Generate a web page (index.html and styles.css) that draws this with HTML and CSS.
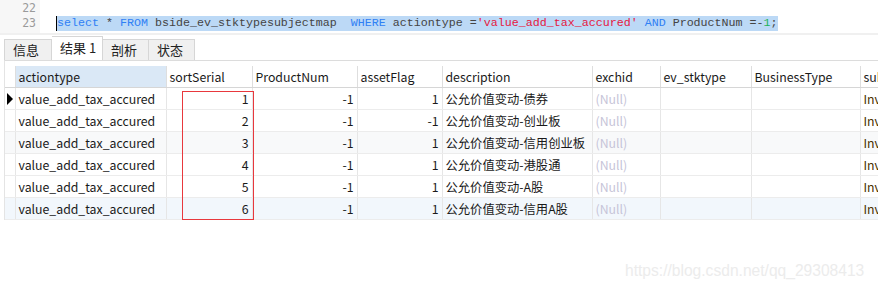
FILE: index.html
```html
<!DOCTYPE html>
<html lang="zh-CN">
<head>
  <meta charset="UTF-8">
  <title>查询结果</title>
  <link rel="stylesheet" href="styles.css">
</head>
<body>
  <div class="editor">
    <div class="gutter">
      <div class="ln">22</div>
      <div class="ln">23</div>
    </div>
    <div class="code">
      <div class="line"></div>
      <div class="line"><span class="sel"><span class="kw">select</span> * <span class="kw">FROM</span> bside_ev_stktypesubjectmap  <span class="kw">WHERE</span> actiontype =<span class="str">'value_add_tax_accured'</span> <span class="kw">AND</span> ProductNum =-<span class="num">1</span>;</span></div>
    </div>
  </div>

  <div class="tabs">
    <div class="tab">信息</div>
    <div class="tab active">结果 1</div>
    <div class="tab">剖析</div>
    <div class="tab">状态</div>
  </div>

  <div class="grid-wrap">
    <table class="grid">
      <colgroup>
        <col style="width:10px">
        <col style="width:151px">
        <col style="width:86px">
        <col style="width:105px">
        <col style="width:85px">
        <col style="width:150px">
        <col style="width:68px">
        <col style="width:91px">
        <col style="width:109px">
        <col style="width:60px">
      </colgroup>
      <thead>
        <tr>
          <th class="ind"></th>
          <th class="cur">actiontype</th>
          <th>sortSerial</th>
          <th>ProductNum</th>
          <th>assetFlag</th>
          <th>description</th>
          <th>exchid</th>
          <th>ev_stktype</th>
          <th>BusinessType</th>
          <th>subjectcode</th>
        </tr>
      </thead>
      <tbody id="rows"></tbody>
    </table>
    <div class="mark"></div>
  </div>

  <div class="watermark">https://blog.csdn.net/qq_29308413</div>

  <script>
    const rows = [
      [1, -1, 1, '公允价值变动-债券'],
      [2, -1, -1, '公允价值变动-创业板'],
      [3, -1, 1, '公允价值变动-信用创业板'],
      [4, -1, 1, '公允价值变动-港股通'],
      [5, -1, 1, '公允价值变动-A股'],
      [6, -1, 1, '公允价值变动-信用A股']
    ];

    const body = document.getElementById('rows');
    rows.forEach((r, i) => {
      const tr = document.createElement('tr');
      if (i === 2) tr.className = 'alt';
      if (i === 5) tr.className = 'last';
      tr.innerHTML = `
        <td class="ind">${i === 0 ? '<span class="arrow"></span>' : ''}</td>
        <td>value_add_tax_accured</td>
        <td class="n">${r[0]}</td>
        <td class="n">${r[1]}</td>
        <td class="n">${r[2]}</td>
        <td>${r[3]}</td>
        <td class="null">(Null)</td>
        <td></td>
        <td></td>
        <td class="sub">Investment</td>
      `;
      body.appendChild(tr);
    });
  </script>
</body>
</html>
```

FILE: styles.css
```css
body {
  margin: 0;
  width: 878px;
  height: 293px;
  overflow: hidden;
  background: #fff;
  font-family: "Noto Sans CJK SC", "Noto Sans", sans-serif;
  position: relative;
}

/* editor */
.editor {
  display: flex;
  height: 33px;
  border-bottom: 2px solid #f0f0f0;
}

.gutter {
  width: 40px;
  background: #f7f7f7;
  padding-top: 1px;
  box-sizing: border-box;
  padding-right: 4px;
  text-align: right;
}

.ln {
  height: 15px;
  line-height: 15px;
  font-family: "DejaVu Sans Mono", monospace;
  font-size: 11.5px;
  color: #9a9a9a;
}

.code {
  padding-top: 1px;
  padding-left: 17px;
  font-family: "Liberation Mono", monospace;
  font-size: 11.67px;
  color: #444;
}

.line {
  height: 15px;
  line-height: 15px;
  white-space: pre;
}

.sel {
  background: #bcd9f6;
  display: inline-block;
  border-left: 1px solid #000;
  margin-left: -1px;
}

.kw { color: #2f80f5; }
.str { color: #e5173f; }
.num { color: #1fb35a; }

/* tabs */
.tabs {
  display: flex;
  align-items: flex-end;
  height: 25px;
  padding-left: 4px;
  font-size: 13px;
}

.tab {
  height: 21px;
  width: 46px;
  box-sizing: border-box;
  padding-left: 8px;
  line-height: 20px;
  background: #f0f0f0;
  border: 1px solid #d6d6d6;
  border-bottom: none;
  border-left: none;
  color: #222;
}

.tab:first-child {
  width: 48px;
  border-left: 1px solid #d6d6d6;
}

.tab.active {
  height: 24px;
  width: 51px;
  background: #fff;
  line-height: 22px;
}

/* grid */
.grid-wrap {
  position: relative;
  margin-left: 4px;
  border-top: 1px solid #dcdcdc;
  border-left: 1px solid #e4e4e4;
  padding-top: 5px;
  height: 154px;
  overflow: hidden;
}

.grid {
  width: 915px;
  border-collapse: collapse;
  table-layout: fixed;
  font-size: 12.3px;
  color: #1a1a1a;
}

.grid th,
.grid td {
  height: 21px;
  padding: 0 3px;
  white-space: nowrap;
  overflow: hidden;
  border-right: 1px solid #e6e6e6;
  border-bottom: 1px solid #ececec;
  text-align: left;
  font-weight: normal;
}

.grid th {
  border-bottom: 1px solid #d6d6d6;
  border-right: 1px solid #dedede;
}

.grid th.cur {
  background: #dae8f6;
}

.grid .ind {
  padding: 0;
}

.grid td.n {
  text-align: right;
}

.grid td.null {
  color: #c6c4d8;
}

.grid td.sub {
  color: #4a3000;
}

.grid tr.alt td {
  background: #f8f9fa;
}

.grid tr.last td {
  background: #f2f7fc;
}

.arrow {
  display: block;
  width: 0;
  height: 0;
  margin-left: 2px;
  border-top: 6px solid transparent;
  border-bottom: 6px solid transparent;
  border-left: 6px solid #000;
}

.mark {
  position: absolute;
  left: 177px;
  top: 30px;
  width: 70px;
  height: 127px;
  border: 1px solid #e8383d;
}

.watermark {
  position: absolute;
  left: 625px;
  top: 262px;
  font-family: "Liberation Sans", Arial, sans-serif;
  font-size: 15.6px;
  color: #ececec;
}
```
